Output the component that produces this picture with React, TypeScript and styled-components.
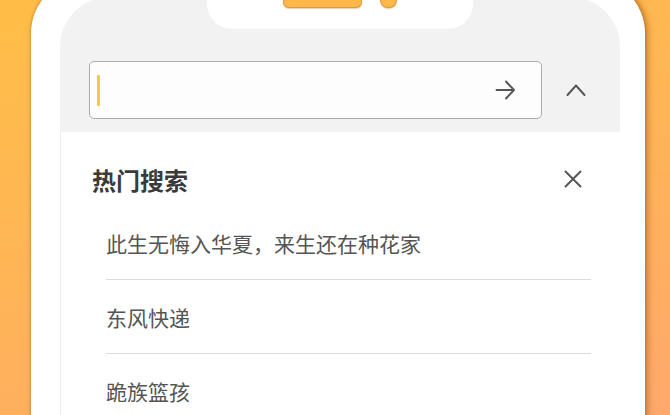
import React from "react";
import styled, { createGlobalStyle } from "styled-components";

const GlobalStyle = createGlobalStyle`
  html, body {
    margin: 0;
    padding: 0;
    height: 415px;
    overflow: hidden;
  }
  body {
    font-family: "Noto Sans CJK SC", "Noto Sans", sans-serif;
  }
`;

const hotList = ["此生无悔入华夏，来生还在种花家", "东风快递", "跪族篮孩"];

const App = (): JSX.Element => {
  return (
    <Page>
      <GlobalStyle />
      <PhoneFrame>
        <Screen>
          <Notch>
            <Speaker />
            <Sensor />
          </Notch>
          <SearchRow>
            <SearchBox>
              <Caret />
              <IconButton>
                <svg width="20" height="20" viewBox="0 0 20 20" fill="none">
                  <path
                    d="M1.5 10H18.5M11 1.5L19 10L11 18.5"
                    stroke="#555"
                    strokeWidth="1.9"
                    strokeLinecap="round"
                    strokeLinejoin="round"
                  />
                </svg>
              </IconButton>
            </SearchBox>
            <IconButton>
              <svg width="20" height="12" viewBox="0 0 20 12" fill="none">
                <path
                  d="M1.5 11L10 1.5L18.5 11"
                  stroke="#555"
                  strokeWidth="1.9"
                  strokeLinecap="round"
                  strokeLinejoin="round"
                />
              </svg>
            </IconButton>
          </SearchRow>
          <Panel>
            <PanelHeader>
              <PanelTitle>热门搜索</PanelTitle>
              <IconButton>
                <svg width="18" height="18" viewBox="0 0 18 18" fill="none">
                  <path
                    d="M1.5 1.5L16.5 16.5M16.5 1.5L1.5 16.5"
                    stroke="#555"
                    strokeWidth="1.9"
                    strokeLinecap="round"
                  />
                </svg>
              </IconButton>
            </PanelHeader>
            <HotList>
              {hotList.map((item) => (
                <HotItem key={item}>{item}</HotItem>
              ))}
            </HotList>
          </Panel>
        </Screen>
      </PhoneFrame>
    </Page>
  );
};

export default App;

const Page = styled.div`
  height: 415px;
  overflow: hidden;
  box-sizing: border-box;
  padding-left: 31px;
  background: linear-gradient(165deg, #ffbe47 0%, #ffb25a 60%, #ffa86c 100%);
`;

const PhoneFrame = styled.div`
  width: 614px;
  height: 520px;
  margin-top: -22px;
  box-sizing: border-box;
  padding: 19px 25px 0 29px;
  background-color: #fff;
  border-radius: 55px;
  box-shadow: 0 0 3px rgba(150, 85, 20, 0.6), 3px 0 6px rgba(150, 85, 20, 0.5);
`;

const Screen = styled.div`
  height: 100%;
  display: flex;
  flex-direction: column;
  background-color: #f2f2f2;
  border-radius: 50px 50px 0 0;
  overflow: hidden;
`;

const Notch = styled.div`
  align-self: center;
  width: 266px;
  height: 32px;
  flex-shrink: 0;
  display: flex;
  justify-content: center;
  gap: 18px;
  background-color: #fff;
  border-radius: 0 0 25px 25px;
`;

const Speaker = styled.div`
  width: 79px;
  height: 11px;
  background-color: #ffb84a;
  border: 1px solid #dc9a3e;
  border-top: none;
  box-sizing: border-box;
  border-radius: 0 0 6px 6px;
  box-shadow: 0 1px 1px rgba(170, 100, 20, 0.3);
`;

const Sensor = styled(Speaker)`
  width: 17px;
  border-radius: 0 0 8px 8px;
`;

const SearchRow = styled.div`
  display: flex;
  align-items: center;
  gap: 22px;
  padding: 32px 0 13px 29px;
  flex-shrink: 0;
`;

const SearchBox = styled.div`
  width: 453px;
  height: 58px;
  box-sizing: border-box;
  display: flex;
  align-items: center;
  justify-content: space-between;
  padding: 0 24px 0 7px;
  background-color: #fdfdfd;
  border: 1.5px solid #ababab;
  border-radius: 5px;
`;

const Caret = styled.span`
  width: 2.5px;
  height: 31px;
  background-color: #ffc83c;
  border-radius: 1px;
`;

const IconButton = styled.div`
  width: 24px;
  height: 24px;
  display: flex;
  align-items: center;
  justify-content: center;
  cursor: pointer;
`;

const Panel = styled.div`
  flex: 1;
  background-color: #fff;
  box-shadow: inset 1px 0 0 #ececec;
`;

const PanelHeader = styled.div`
  height: 50px;
  margin: 22px 0 2px;
  display: flex;
  align-items: center;
  justify-content: space-between;
  padding: 0 35px 0 32px;
`;

const PanelTitle = styled.div`
  font-size: 24px;
  font-weight: 700;
  color: #3a3a3a;
`;

const HotList = styled.div`
  margin: 0 29px 0 46px;
`;

const HotItem = styled.div`
  height: 73px;
  display: flex;
  align-items: center;
  font-size: 21px;
  color: #555;
  border-bottom: 1px solid #dcdcdc;
`;
